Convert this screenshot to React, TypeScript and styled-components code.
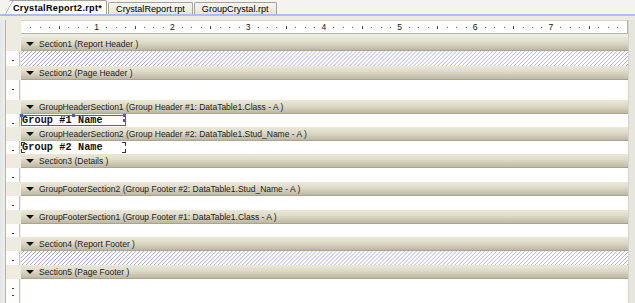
import React from "react";
import styled, { createGlobalStyle, css } from "styled-components";

const GlobalStyle = createGlobalStyle`
  html, body {
    margin: 0;
    padding: 0;
    width: 635px;
    height: 303px;
    overflow: hidden;
    background: #eeece0;
    font-family: "Liberation Sans", Arial, sans-serif;
  }
`;

const Window = styled.div`
  width: 635px;
  height: 303px;
  display: flex;
  flex-direction: column;
  overflow: hidden;
  background: #eeece0;
`;

const TabStrip = styled.div`
  height: 14px;
  flex: none;
  display: flex;
  align-items: flex-end;
  padding-left: 9px;
  background: #f4f3ee;
  border-bottom: 2px solid #a9c0e8;
`;

const Tab = styled.div<{ $active?: boolean }>`
  position: relative;
  height: ${({ $active }) => ($active ? "13px" : "11px")};
  display: flex;
  align-items: center;
  padding: 0 ${({ $active }) => ($active ? "4px 0 4px" : "7px")};
  margin-right: 1px;
  font-size: 9.1px;
  color: #000;
  border: 1px solid #a3a39a;
  border-bottom: none;
  border-radius: 2px 2px 0 0;
  background: ${({ $active }) =>
    $active ? "#fcfcfb" : "linear-gradient(#f6f5f0, #e6e4dc)"};
  ${({ $active }) =>
    $active &&
    css`
      font-weight: bold;
      letter-spacing: 0.3px;
      border-left: none;
      &::before {
        content: "";
        position: absolute;
        left: -4px;
        top: -1px;
        bottom: 0;
        width: 8px;
        background: #fcfcfb;
        border-left: 1px solid #a3a39a;
        border-top: 1px solid #a3a39a;
        border-top-left-radius: 3px;
        transform: skewX(-28deg);
        transform-origin: bottom left;
        z-index: 0;
      }
    `}
`;

const TabLabel = styled.span`
  position: relative;
  z-index: 1;
`;

const Body = styled.div`
  flex: 1;
  display: flex;
  padding-top: 4px;
  min-height: 0;
`;

const LeftEdge = styled.div`
  flex: none;
  width: 5px;
  border-right: 1px solid #b7b5a8;
  background: linear-gradient(to right, #dfe6f2 0, #eeece0 3px);
`;

const Designer = styled.div`
  flex: 1;
  min-width: 0;
  display: flex;
  flex-direction: column;
`;

const RightStrip = styled.div`
  flex: none;
  width: 6px;
  background: #e6e5de;
  border-left: 1px solid #d6d4c8;
`;

const Row = styled.div<{ $h?: number }>`
  display: flex;
  height: ${({ $h }) => ($h ? `${$h}px` : "auto")};
  flex: ${({ $h }) => ($h ? "none" : "1")};
`;

const Gutter = styled.div<{ $white?: boolean }>`
  flex: none;
  width: 14px;
  border-right: 1px solid ${({ $white }) => ($white ? "#c9c7bb" : "transparent")};
  margin-right: 1px;
  background: ${({ $white }) => ($white ? "#fdfdfd" : "transparent")};
  display: flex;
  flex-direction: column;
  align-items: center;
  padding-top: ${({ $white }) => ($white ? "9px" : "0")};
  gap: 6px;
  box-sizing: border-box;
`;

const Dot = styled.span`
  width: 2px;
  height: 1px;
  background: #333;
  flex: none;
`;

const RulerBox = styled.div`
  flex: 1;
  height: 12px;
  background: #fff;
  border-top: 1px solid #d8d6cc;
  border-bottom: 1px solid #b8b6aa;
  border-right: 1px solid #b8b6aa;
  overflow: hidden;
`;

const SectionBar = styled.div`
  flex: 1;
  display: flex;
  align-items: center;
  gap: 5px;
  padding-left: 5px;
  font-size: 8.5px;
  color: #1c1c1c;
  background: linear-gradient(#ebe8d8 0%, #dedac7 45%, #bcb8a4 100%);
  border-bottom: 1px solid #a9a591;
  box-sizing: border-box;
  white-space: nowrap;
  overflow: hidden;
`;

const Arrow = styled.span`
  flex: none;
  width: 0;
  height: 0;
  border-left: 4px solid transparent;
  border-right: 4px solid transparent;
  border-top: 4px solid #111;
`;

const Band = styled.div<{ $hatched?: boolean }>`
  flex: 1;
  position: relative;
  background: ${({ $hatched }) =>
    $hatched
      ? "repeating-linear-gradient(135deg, #fff 0px, #fff 1.9px, #a4a4e2 2.1px, #a4a4e2 2.55px, #fff 2.83px)"
      : "#fff"};
`;

const Field = styled.div<{ $selected?: boolean }>`
  position: absolute;
  left: 0;
  top: 1px;
  width: 105px;
  height: 11px;
  box-sizing: border-box;
  display: flex;
  align-items: center;
  font-family: "Liberation Mono", "Courier New", monospace;
  font-weight: bold;
  font-size: 10.2px;
  letter-spacing: 0.1px;
  color: #111;
  border: 1px solid ${({ $selected }) => ($selected ? "#3c5fd0" : "transparent")};
`;

const Handle = styled.span<{ $x: string; $y: string }>`
  position: absolute;
  width: 3px;
  height: 3px;
  background: #3c5fd0;
  left: ${({ $x }) => $x};
  top: ${({ $y }) => $y};
`;

const Corner = styled.span<{ $right?: boolean; $bottom?: boolean }>`
  position: absolute;
  width: 3px;
  height: 3px;
  ${({ $right }) => ($right ? "right: -1px;" : "left: -1px;")}
  ${({ $bottom }) => ($bottom ? "bottom: -1px;" : "top: -1px;")}
  border-color: #333;
  border-style: solid;
  border-width: ${({ $right, $bottom }) =>
    `${$bottom ? 0 : 1}px ${$right ? 1 : 0}px ${$bottom ? 1 : 0}px ${$right ? 0 : 1}px`};
`;

const INCH = 75.7;

const Ruler = () => {
  const marks: React.ReactNode[] = [];
  for (let i = 1; i < 8 * 8; i++) {
    const x = (i * INCH) / 8;
    if (i % 8 === 0) {
      marks.push(
        <text key={i} x={x} y={9} fontSize="8.5" textAnchor="middle" fontFamily="Liberation Sans, Arial, sans-serif" fill="#111">
          {i / 8}
        </text>
      );
    } else if (i % 4 === 0) {
      marks.push(<rect key={i} x={Math.round(x)} y={5} width={1} height={3} fill="#444" />);
    } else {
      marks.push(<rect key={i} x={Math.round(x)} y={6} width={1} height={1} fill="#555" />);
    }
  }
  return (
    <svg width="610" height="12" style={{ display: "block" }}>
      {marks}
    </svg>
  );
};

type Section = {
  title: string;
  h: number;
  hatched?: boolean;
  field?: { text: string; selected?: boolean };
  dots?: number;
};

const sections: Section[] = [
  { title: "Section1 (Report Header  )", h: 15, hatched: true },
  { title: "Section2 (Page Header  )", h: 20 },
  { title: "GroupHeaderSection1 (Group Header #1: DataTable1.Class - A )", h: 13, field: { text: "Group #1 Name", selected: true } },
  { title: "GroupHeaderSection2 (Group Header #2: DataTable1.Stud_Name - A )", h: 13, field: { text: "Group #2 Name" } },
  { title: "Section3 (Details  )", h: 14 },
  { title: "GroupFooterSection2 (Group Footer #2: DataTable1.Stud_Name - A )", h: 14 },
  { title: "GroupFooterSection1 (Group Footer #1: DataTable1.Class - A )", h: 13 },
  { title: "Section4 (Report Footer  )", h: 14, hatched: true },
  { title: "Section5 (Page Footer  )", h: 0, dots: 2 },
];

export default function App() {
  return (
    <Window>
      <GlobalStyle />
      <TabStrip>
        <Tab $active>
          <TabLabel>CrystalReport2.rpt*</TabLabel>
        </Tab>
        <Tab>CrystalReport.rpt</Tab>
        <Tab>GroupCrystal.rpt</Tab>
      </TabStrip>
      <Body>
        <LeftEdge />
        <Designer>
          <Row $h={17}>
            <Gutter />
            <RulerBox>
              <Ruler />
            </RulerBox>
          </Row>
          {sections.map((s) => (
            <React.Fragment key={s.title}>
              <Row $h={14}>
                <Gutter />
                <SectionBar>
                  <Arrow />
                  {s.title}
                </SectionBar>
              </Row>
              <Row $h={s.h || undefined}>
                <Gutter $white>
                  {Array.from({ length: s.dots ?? 1 }, (_, i) => (
                    <Dot key={i} />
                  ))}
                </Gutter>
                <Band $hatched={s.hatched}>
                  {s.field && (
                    <Field $selected={s.field.selected}>
                      {s.field.text}
                      {s.field.selected ? (
                        <>
                          <Handle $x="-2px" $y="-2px" />
                          <Handle $x="50px" $y="-2px" />
                          <Handle $x="101px" $y="-2px" />
                          <Handle $x="101px" $y="3px" />
                        </>
                      ) : (
                        <>
                          <Corner />
                          <Corner $right />
                          <Corner $bottom />
                          <Corner $right $bottom />
                        </>
                      )}
                    </Field>
                  )}
                </Band>
              </Row>
            </React.Fragment>
          ))}
        </Designer>
        <RightStrip />
      </Body>
    </Window>
  );
}
